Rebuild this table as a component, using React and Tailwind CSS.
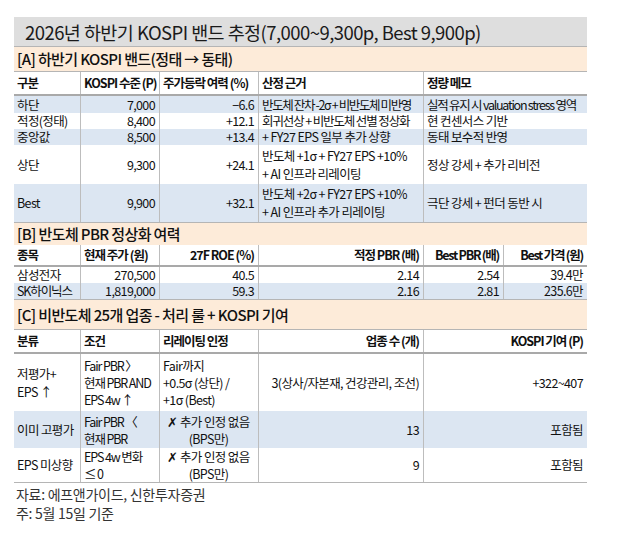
import React from "react";

const BLUE = "bg-[#dce6f2]";
const PEACH = "bg-[#fdebd9]";

function Row({ widths, cells, className = "", h, sep = true }) {
  return (
    <div className={`flex ${className}`} style={{ height: h }}>
      {cells.map((c, i) => (
        <div
          key={i}
          style={{ width: widths[i] }}
          className={`shrink-0 whitespace-nowrap flex flex-col justify-center pl-[3px] pr-[4px] ${i > 0 && sep ? "border-l border-[#bdbdbd]" : ""} ${c.a === "r" ? "items-end text-right" : c.a === "c" ? "items-center text-center" : "items-start text-left"} ${c.cls || ""}`}
        >
          {c.t}
        </div>
      ))}
    </div>
  );
}

const WA = [66, 79, 99, 165, 164];
const WB = [66, 79, 99, 165, 80, 84];
const HD = "border-b-2 border-[#a9a9a9] font-bold tracking-[-0.08em]";

export default function App() {
  return (
    <div className="w-[630px] h-[549px] bg-white font-['Noto_Sans_CJK_KR',sans-serif] text-[12.5px] leading-[14px] text-[#111] tracking-[-0.05em]">
      <div className="pt-[17px] pl-[14px] w-[587px]">
        <div className="h-[30px] bg-[#dedede] border-b border-[#b5b5b5] flex items-center pl-[11px] text-[18.5px] leading-[22px] tracking-[-0.03em] text-[#1a1a1a] whitespace-nowrap">
          2026년 하반기 KOSPI 밴드 추정(7,000~9,300p, Best 9,900p)
        </div>
        <div className={`h-[25px] ${PEACH} border-b border-[#b5b5b5] flex items-center pl-[3px] text-[15px] leading-[18px] font-medium whitespace-nowrap`}>
          [A] 하반기 KOSPI 밴드(정태 → 동태)
        </div>
        <Row
          widths={WA}
          h={24}
          className={HD}
          cells={[
            { t: "구분" },
            { t: "KOSPI 수준 (P)" },
            { t: "주가등락 여력 (%)" },
            { t: "산정 근거" },
            { t: "정량 메모" },
          ]}
        />
        <Row
          widths={WA}
          h={17}
          className={BLUE}
          cells={[
            { t: "하단" },
            { t: "7,000", a: "r" },
            { t: "−6.6", a: "r" },
            { t: "반도체 잔차 -2σ + 비반도체 미반영", cls: "tracking-[-0.11em]" },
            { t: "실적 유지 시 valuation stress 영역", cls: "tracking-[-0.1em]" },
          ]}
        />
        <Row
          widths={WA}
          h={16}
          cells={[
            { t: "적정(정태)" },
            { t: "8,400", a: "r" },
            { t: "+12.1", a: "r" },
            { t: "회귀선상 + 비반도체 선별 정상화", cls: "tracking-[-0.09em]" },
            { t: "현 컨센서스 기반" },
          ]}
        />
        <Row
          widths={WA}
          h={16}
          className={BLUE}
          cells={[
            { t: "중앙값" },
            { t: "8,500", a: "r" },
            { t: "+13.4", a: "r" },
            { t: "+ FY27 EPS 일부 추가 상향" },
            { t: "동태 보수적 반영" },
          ]}
        />
        <Row
          widths={WA}
          h={39}
          cells={[
            { t: "상단" },
            { t: "9,300", a: "r" },
            { t: "+24.1", a: "r" },
            { t: (<><span>반도체 +1σ + FY27 EPS +10%</span><span>+ AI 인프라 리레이팅</span></>), cls: "leading-[18px]" },
            { t: "정상 강세 + 추가 리비전" },
          ]}
        />
        <Row
          widths={WA}
          h={39}
          className={`${BLUE} border-b border-[#b5b5b5]`}
          cells={[
            { t: "Best" },
            { t: "9,900", a: "r" },
            { t: "+32.1", a: "r" },
            { t: (<><span>반도체 +2σ + FY27 EPS +10%</span><span>+ AI 인프라 추가 리레이팅</span></>), cls: "leading-[18px]" },
            { t: "극단 강세 + 펀더 동반 시" },
          ]}
        />
        <div className={`h-[22px] ${PEACH} flex items-center pl-[3px] text-[15px] leading-[18px] font-medium whitespace-nowrap`}>
          [B] 반도체 PBR 정상화 여력
        </div>
        <Row
          widths={WB}
          h={22}
          className={HD}
          cells={[
            { t: "종목" },
            { t: "현재 주가 (원)" },
            { t: "27F ROE (%)", a: "r" },
            { t: "적정 PBR (배)", a: "r" },
            { t: "Best PBR (배)", a: "r", cls: "tracking-[-0.1em]" },
            { t: "Best 가격 (원)", a: "r", cls: "tracking-[-0.1em]" },
          ]}
        />
        <Row
          widths={WB}
          h={16}
          cells={[
            { t: "삼성전자" },
            { t: "270,500", a: "r" },
            { t: "40.5", a: "r" },
            { t: "2.14", a: "r" },
            { t: "2.54", a: "r" },
            { t: "39.4만", a: "r" },
          ]}
        />
        <Row
          widths={WB}
          h={17}
          className={`${BLUE} border-b border-[#b5b5b5]`}
          cells={[
            { t: "SK하이닉스", cls: "tracking-[-0.09em]" },
            { t: "1,819,000", a: "r" },
            { t: "59.3", a: "r" },
            { t: "2.16", a: "r" },
            { t: "2.81", a: "r" },
            { t: "235.6만", a: "r" },
          ]}
        />
        <div className={`h-[30px] ${PEACH} border-b border-[#b5b5b5] flex items-center pl-[3px] text-[15px] leading-[18px] font-medium whitespace-nowrap`}>
          [C] 비반도체 25개 업종 - 처리 룰 + KOSPI 기여
        </div>
        <Row
          widths={WA}
          h={24}
          className={HD}
          cells={[
            { t: "분류" },
            { t: "조건" },
            { t: "리레이팅 인정" },
            { t: "업종 수 (개)", a: "r" },
            { t: "KOSPI 기여 (P)", a: "r" },
          ]}
        />
        <Row
          widths={WA}
          h={57}
          cells={[
            { t: (<><span>저평가+</span><span>EPS ↑</span></>), cls: "leading-[18px]" },
            { t: (<><span>Fair PBR 〉</span><span>현재 PBR AND</span><span>EPS 4w ↑</span></>), cls: "leading-[17px] tracking-[-0.09em]" },
            { t: (<><span>Fair까지</span><span>+0.5σ (상단) /</span><span>+1σ (Best)</span></>), cls: "leading-[17px]" },
            { t: "3(상사/자본재, 건강관리, 조선)", a: "r" },
            { t: "+322~407", a: "r" },
          ]}
        />
        <Row
          widths={WA}
          h={37}
          className={BLUE}
          cells={[
            { t: "이미 고평가" },
            { t: (<><span>Fair PBR 〈</span><span>현재 PBR</span></>), cls: "leading-[17px] tracking-[-0.09em]" },
            { t: (<><span>✗ 추가 인정 없음</span><span>(BPS만)</span></>), a: "c", cls: "leading-[17px]" },
            { t: "13", a: "r" },
            { t: "포함됨", a: "r" },
          ]}
        />
        <Row
          widths={WA}
          h={35}
          className="border-b border-[#b5b5b5]"
          cells={[
            { t: "EPS 미상향" },
            { t: (<><span>EPS 4w 변화</span><span>≤ 0</span></>), cls: "leading-[17px] tracking-[-0.09em]" },
            { t: (<><span>✗ 추가 인정 없음</span><span>(BPS만)</span></>), a: "c", cls: "leading-[17px]" },
            { t: "9", a: "r" },
            { t: "포함됨", a: "r" },
          ]}
        />
        <div className="pl-[2px] pt-[2px] text-[14px] leading-[19px] text-[#333] tracking-[-0.02em]">
          <div>자료: 에프앤가이드, 신한투자증권</div>
          <div>주: 5월 15일 기준</div>
        </div>
      </div>
    </div>
  );
}
